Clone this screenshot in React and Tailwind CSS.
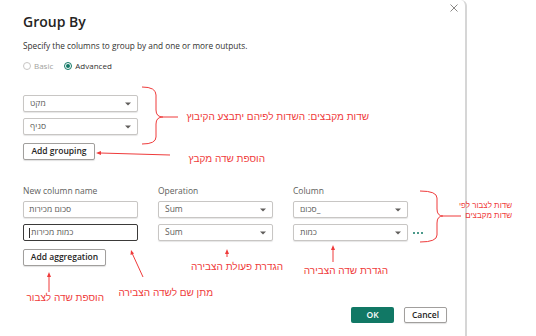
import React from "react";

const ui = "font-['Open_Sans','Liberation_Sans',sans-serif]";
const heb = "font-['Liberation_Sans','DejaVu_Sans',sans-serif]";

function Caret() {
  return (
    <svg width="6" height="4" viewBox="0 0 6 4">
      <path d="M0 0.5h6L3 3.5z" fill="#605e5c" />
    </svg>
  );
}

function Select({ value }) {
  return (
    <div className="h-[17px] w-[115px] flex items-center justify-between rounded-[2px] border border-[#c8c6c4] bg-white pl-[6px] pr-[6px] shadow-[0_1px_1px_rgba(0,0,0,0.1)]">
      <span className="text-[8.5px] leading-none text-[#605e5c]">{value}</span>
      <Caret />
    </div>
  );
}

function TextBox({ value, focused }) {
  return (
    <div
      className={`h-[17px] w-[115px] flex items-center rounded-[2px] bg-white pl-[5px] ${
        focused
          ? "border-[1.5px] border-[#3b3a39]"
          : "border border-[#c8c6c4] shadow-[0_1px_1px_rgba(0,0,0,0.1)]"
      }`}
    >
      {focused && <span className="w-px h-[10px] bg-[#323130] mr-px" />}
      <span className="text-[8.5px] leading-none text-[#605e5c]">{value}</span>
    </div>
  );
}

function Button({ children, className }) {
  return (
    <div
      className={`h-[17px] flex items-center justify-center rounded-[2px] border border-[#a19f9d] bg-white text-[8.5px] font-semibold text-[#252423] shadow-[0_1px_1px_rgba(0,0,0,0.12)] ${className}`}
    >
      {children}
    </div>
  );
}

function Note({ children, className }) {
  return (
    <span
      dir="rtl"
      className={`absolute whitespace-nowrap text-[10px] leading-[12px] text-[#ef3b3b] ${heb} ${className}`}
    >
      {children}
    </span>
  );
}

export default function App() {
  return (
    <div className={`relative w-[536px] h-[336px] bg-white overflow-hidden ${ui}`}>
      {/* Dialog */}
      <div className="relative w-[467px] h-full border-r-2 border-[#d6d6d6] rounded-tr-[6px] pl-[23px] pr-[18px] pt-[12px] flex flex-col">
        <svg className="absolute top-[4px] right-[7px]" width="8" height="8" viewBox="0 0 8 8">
          <path d="M0.5 0.5l7 7M7.5 0.5l-7 7" stroke="#8a8886" strokeWidth="1" />
        </svg>

        <h1 className="text-[14px] leading-[20px] font-semibold text-[#252423]">Group By</h1>
        <p className="mt-[8px] text-[8.25px] leading-[12px] text-[#323130]">
          Specify the columns to group by and one or more outputs.
        </p>

        {/* Radios */}
        <div className="mt-[8px] h-[12px] flex items-center text-[8px] leading-none">
          <span className="w-[8px] h-[8px] rounded-full border border-[#c8c6c4]" />
          <span className="ml-[3px] text-[#a19f9d]">Basic</span>
          <span className="ml-[11px] w-[8px] h-[8px] rounded-full border border-[#117865] flex items-center justify-center">
            <span className="w-[4px] h-[4px] rounded-full bg-[#117865]" />
          </span>
          <span className="ml-[3px] text-[#323130]">Advanced</span>
        </div>

        {/* Grouping */}
        <div className="mt-[23px] flex flex-col gap-[6px]">
          <Select value="מקט" />
          <Select value="סניף" />
        </div>
        <Button className="mt-[8px] w-[72px]">Add grouping</Button>

        {/* Aggregations */}
        <div className="mt-[25px] grid grid-cols-[115px_115px_115px_20px] gap-x-[20px] text-[8.5px] leading-[12px] text-[#605e5c]">
          <span>New column name</span>
          <span>Operation</span>
          <span>Column</span>
          <span />
        </div>
        <div className="mt-[4px] grid grid-cols-[115px_115px_115px_20px] gap-x-[20px] gap-y-[6px] items-center">
          <TextBox value="סכום מכירות" />
          <Select value="Sum" />
          <Select value="סכום_" />
          <span />
          <TextBox value="כמות מכירות" focused />
          <Select value="Sum" />
          <Select value="כמות" />
          <div className="-ml-[15px] flex gap-[2px]">
            <span className="w-[2px] h-[2px] rounded-full bg-[#117865]" />
            <span className="w-[2px] h-[2px] rounded-full bg-[#117865]" />
            <span className="w-[2px] h-[2px] rounded-full bg-[#117865]" />
          </div>
        </div>
        <Button className="mt-[8px] w-[83px]">Add aggregation</Button>

        {/* Footer */}
        <div className="mt-[41px] flex justify-end gap-[10px]">
          <div className="h-[16px] w-[43px] flex items-center justify-center rounded-[2px] bg-[#117865] text-[8.5px] font-semibold text-white">
            OK
          </div>
          <Button className="!h-[16px] w-[43px]">Cancel</Button>
        </div>
      </div>

      {/* Annotations */}
      <svg className="absolute inset-0 pointer-events-none" width="536" height="336" viewBox="0 0 536 336">
        <g stroke="#ef3b3b" strokeWidth="1" fill="none">
          <path d="M142 87 Q156 87 156 95 L156 110 Q156 117 163 117 L178 117 M163 117 Q156 117 156 124 L156 137 Q156 144 142 144" />
          <path d="M170 155 L100 153" />
          <path d="M420 191 Q437 191 437 198 L437 209 Q437 216 443 216 L461 216 M443 216 Q437 216 437 223 L437 235 Q437 242 420 242" />
          <path d="M333 262 L333 248" />
          <path d="M227 257 L227 252" />
          <path d="M143 277 L132 253" />
          <path d="M49 292 L49 275" />
        </g>
        <g fill="#ef3b3b">
          <polygon points="96,153 101,151 101,155" />
          <polygon points="333,245 331,250 335,250" />
          <polygon points="227,249 225,254 229,254" />
          <polygon points="131,250 130.5,255 134,253.5" />
          <polygon points="49,272 47,277 51,277" />
        </g>
      </svg>

      <Note className="right-[167px] top-[111px]">שדות מקבצים: השדות לפיהם יתבצע הקיבוץ</Note>
      <Note className="right-[271px] top-[153px]">הוספת שדה מקבץ</Note>
      <Note className="right-[24px] top-[201px] !text-[8px] !leading-[10px] text-right">
        שדות לצבור לפי
        <br />
        שדות מקבצים
      </Note>
      <Note className="right-[253px] top-[261px]">הגדרת פעולת הצבירה</Note>
      <Note className="right-[148px] top-[265px]">הגדרת שדה הצבירה</Note>
      <Note className="right-[323px] top-[287px]">מתן שם לשדה הצבירה</Note>
      <Note className="right-[432px] top-[292px]">הוספת שדה לצבור</Note>
    </div>
  );
}
